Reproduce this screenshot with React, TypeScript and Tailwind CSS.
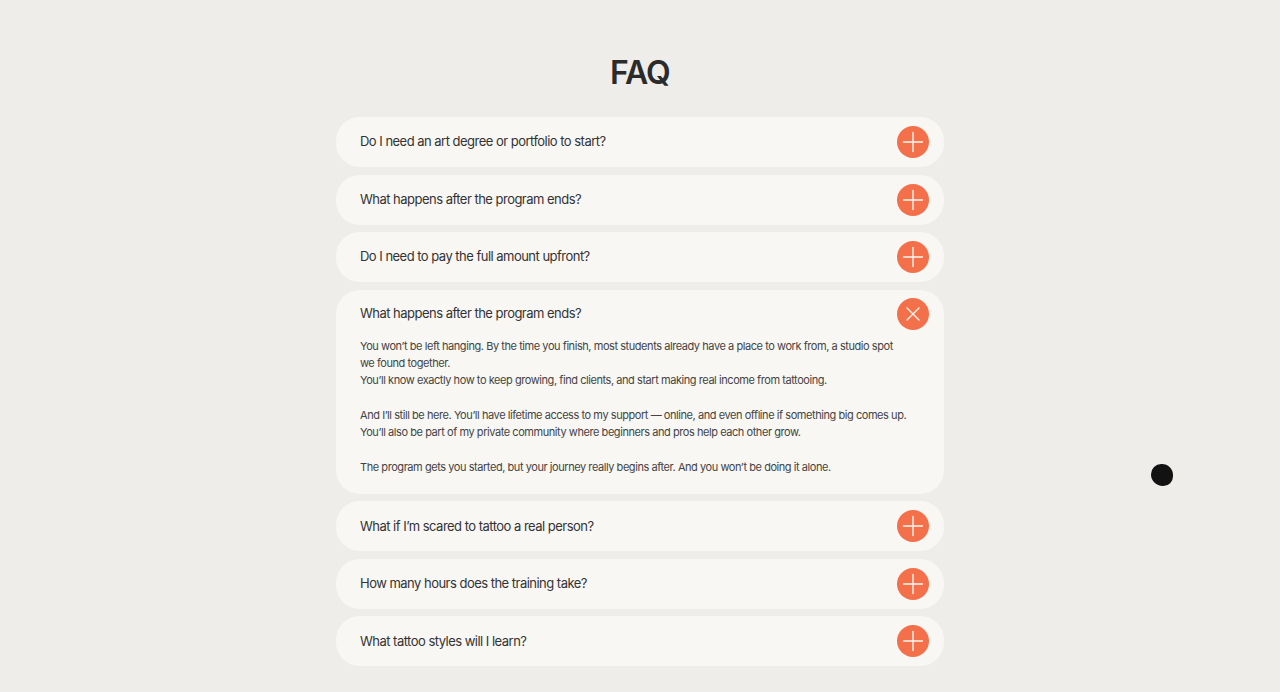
import React from "react";

const items = [
  { q: "Do I need an art degree or portfolio to start?" },
  { q: "What happens after the program ends?" },
  { q: "Do I need to pay the full amount upfront?" },
  { q: "What happens after the program ends?", open: true },
  { q: "What if I’m scared to tattoo a real person?" },
  { q: "How many hours does the training take?" },
  { q: "What tattoo styles will I learn?" },
];

function PlusIcon() {
  return (
    <svg width="32" height="32" viewBox="0 0 32 32" className="shrink-0">
      <circle cx="16" cy="16" r="16" fill="#f4704b" />
      <path d="M16 6.5v19M6.5 16h19" stroke="#fff7f2" strokeWidth="1.4" strokeLinecap="round" />
    </svg>
  );
}

function CloseIcon() {
  return (
    <svg width="32" height="32" viewBox="0 0 32 32" className="shrink-0">
      <circle cx="16" cy="16" r="16" fill="#f4704b" />
      <path d="M10 10l12 12M22 10L10 22" stroke="#fff7f2" strokeWidth="1.4" strokeLinecap="round" />
    </svg>
  );
}

export default function App() {
  return (
    <div
      className="relative min-h-[692px] w-full bg-[#eeede9] text-[#2f2f2f]"
      style={{ fontFamily: "Inter, 'Noto Sans', sans-serif" }}
    >
      <div className="mx-auto flex w-[608px] flex-col items-center pt-[52px]">
        <h2 className="text-[32px] font-semibold leading-[42px] tracking-[-0.03em] text-[#2b2b2b]">FAQ</h2>
        <div className="mt-[23px] flex w-full flex-col gap-[7.5px]">
          {items.map((it, i) =>
            it.open ? (
              <div key={i} className="rounded-[24px] bg-[#f8f7f3] pb-[18px]">
                <div className="flex h-[48px] items-center justify-between pl-6 pr-[15px]">
                  <span className="text-[13px] tracking-[-0.04em] text-[#333]">{it.q}</span>
                  <CloseIcon />
                </div>
                <div className="max-w-[573px] pl-6 text-[11px] leading-[17.3px] tracking-[-0.04em] text-[#444]">
                  <p>
                    You won’t be left hanging. By the time you finish, most students already have a place to work from, a studio spot we found together.
                    <br />
                    You’ll know exactly how to keep growing, find clients, and start making real income from tattooing.
                  </p>
                  <p className="mt-[17.3px]">
                    And I’ll still be here. You’ll have lifetime access to my support — online, and even offline if something big comes up.
                    <br />
                    You’ll also be part of my private community where beginners and pros help each other grow.
                  </p>
                  <p className="mt-[17.3px]">
                    The program gets you started, but your journey really begins after. And you won’t be doing it alone.
                  </p>
                </div>
              </div>
            ) : (
              <div
                key={i}
                className="flex h-[50px] items-center justify-between rounded-[24px] bg-[#f8f7f3] pl-6 pr-[15px]"
              >
                <span className="text-[13px] tracking-[-0.04em] text-[#333]">{it.q}</span>
                <PlusIcon />
              </div>
            )
          )}
        </div>
      </div>
      <div className="absolute left-[1151px] top-[464px] h-[22px] w-[22px] rounded-[48%_52%_45%_55%] bg-[#121212]" />
    </div>
  );
}
